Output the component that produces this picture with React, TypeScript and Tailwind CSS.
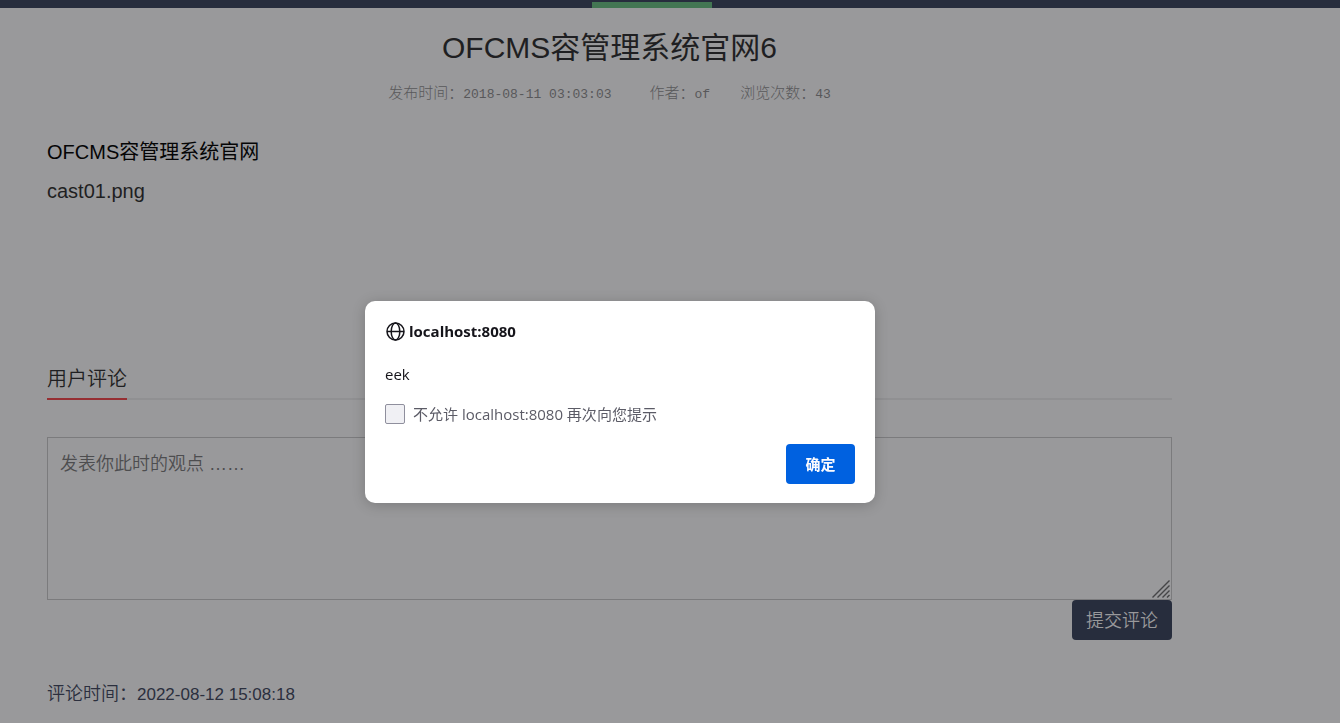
import React from "react";

const Mono = ({ children }: { children: React.ReactNode }) => (
  <span className="whitespace-pre font-['Liberation_Mono','Noto_Sans_CJK_SC',monospace] text-[13px]">{children}</span>
);

function GlobeIcon() {
  return (
    <svg width="20" height="20" viewBox="0 0 20 20" fill="none" stroke="#15141a" strokeWidth="1.5" aria-hidden="true">
      <circle cx="10.5" cy="10.5" r="8.5" />
      <ellipse cx="10.5" cy="10.5" rx="4.3" ry="8.5" />
      <path d="M2 10.5h17" />
    </svg>
  );
}

function AlertDialog() {
  return (
    <div className="fixed inset-0 flex items-start justify-center pt-[301px] pr-[100px]">
      <div
        role="alertdialog"
        aria-labelledby="origin"
        aria-describedby="message"
        className="flex w-[510px] flex-col rounded-[10px] bg-white px-5 pt-5 pb-[19px] font-['Open_Sans','Noto_Sans_CJK_SC',sans-serif] text-[#15141a] shadow-[0_2px_14px_rgba(0,0,0,0.2)]"
      >
        <h2 id="origin" className="flex h-5 items-center gap-1 text-[15px] leading-5 font-bold">
          <GlobeIcon />
          localhost:8080
        </h2>
        <p id="message" className="mt-[23px] text-[15px] leading-5">eek</p>
        <label className="mt-5 flex h-5 items-center gap-2 text-[15px] leading-5 text-[#5b5b66]">
          <input type="checkbox" className="size-5 appearance-none rounded-[2px] border border-[#8f8f9d] bg-[#f0f0f4]" />
          <span>不允许 localhost:8080 再次向您提示</span>
        </label>
        <button type="button" className="mt-5 h-10 w-[69px] self-end rounded bg-[#0061e0] text-[15px] font-bold text-[#fbfbfe]">
          确定
        </button>
      </div>
    </div>
  );
}

export default function App() {
  return (
    <div className="min-h-screen bg-[#99999b] font-['Liberation_Sans','Noto_Sans_CJK_SC',sans-serif] text-[#1f1f22]">
      <header className="flex h-2 items-end bg-[#272d3d] pl-[592px]">
        <div className="h-1.5 w-[120px] bg-[#437653]" />
      </header>
      <main className="mr-[168px] ml-[47px] flex flex-col">
        <h1 className="mt-[19px] text-center text-[30px] leading-[42px]">OFCMS容管理系统官网6</h1>
        <div className="mt-[15px] flex h-5 items-center justify-center text-[15px] leading-5 font-light text-[#58585a]">
          <span className="mr-[38px]">发布时间：<Mono>2018-08-11 03:03:03</Mono></span>
          <span className="mr-[30px]">作者：<Mono>of</Mono></span>
          <span>浏览次数：<Mono>43</Mono></span>
        </div>
        <article className="mt-[29px] min-h-[227px] text-[20px] leading-[39px]">
          <p className="text-[#050506]">OFCMS容管理系统官网</p>
          <p>cast01.png</p>
        </article>
        <section>
          <div className="flex border-b-2 border-[#909092]">
            <h2 className="-mb-0.5 border-b-2 border-[#962f33] text-[20px] leading-[38px] font-[350]">用户评论</h2>
          </div>
          <form className="mt-[37px] flex flex-col">
            <div className="relative flex">
              <textarea
                aria-label="发表你此时的观点"
                placeholder="发表你此时的观点 ……"
                className="h-[163px] w-full resize-none border border-[#7b7b7d] bg-transparent px-3 py-[13px] text-[18px] leading-[27px] font-[350] placeholder:text-[#4d4d4f]"
              />
              <svg className="pointer-events-none absolute right-0.5 bottom-0.5" width="18" height="18" viewBox="0 0 18 18" stroke="#454547" strokeWidth="1.4" aria-hidden="true">
                <path d="M0.5 17.5 17.5 0.5M5.5 17.5 17.5 5.5M10.5 17.5 17.5 10.5M15 17.5 17.5 15" />
              </svg>
            </div>
            <button type="button" className="h-10 w-[100px] self-end rounded bg-[#272d3d] pt-0.5 text-[18px] font-[350] text-[#99999b]">
              提交评论
            </button>
          </form>
          <p className="mt-10 text-[17px] leading-7 text-[#2b2f3e]">
            <span className="text-[18px] font-[350]">评论时间：</span>2022-08-12 15:08:18
          </p>
        </section>
      </main>
      <AlertDialog />
    </div>
  );
}
